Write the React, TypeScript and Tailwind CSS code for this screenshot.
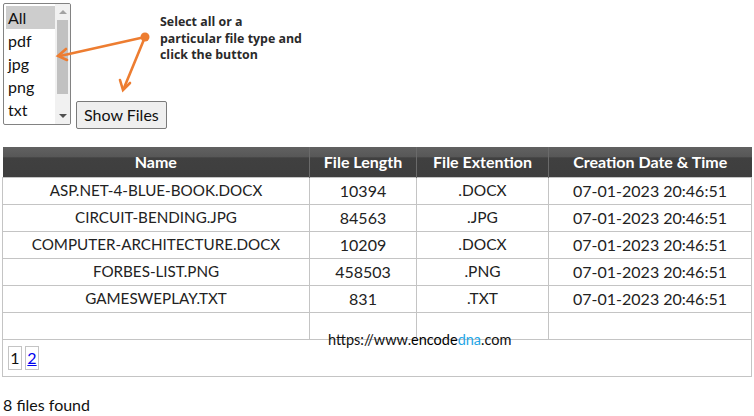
import React from "react";

const files = [
  { name: "ASP.NET-4-BLUE-BOOK.DOCX", len: "10394", ext: ".DOCX" },
  { name: "CIRCUIT-BENDING.JPG", len: "84563", ext: ".JPG" },
  { name: "COMPUTER-ARCHITECTURE.DOCX", len: "10209", ext: ".DOCX" },
  { name: "FORBES-LIST.PNG", len: "458503", ext: ".PNG" },
  { name: "GAMESWEPLAY.TXT", len: "831", ext: ".TXT" },
];

const types = ["All", "pdf", "jpg", "png", "txt"];

function ListBox() {
  return (
    <div className="flex w-[68px] h-[122px] border border-[#828282] rounded-[2px] bg-white overflow-hidden">
      <div className="flex-1 pt-[2px] pl-[2px]">
        {types.map((t, i) => (
          <div
            key={t}
            className={`h-[23px] leading-[23px] pl-[2px] text-[16px] text-[#111] ${i === 0 ? "bg-[#cdcdcd]" : ""}`}
          >
            {t}
          </div>
        ))}
      </div>
      <div className="w-[15px] bg-[#f1f1f1] flex flex-col items-center">
        <div className="h-[16px] flex items-center justify-center">
          <div className="w-0 h-0 border-l-[4px] border-r-[4px] border-b-[4px] border-l-transparent border-r-transparent border-b-[#a3a3a3]" />
        </div>
        <div className="w-[11px] h-[74px] bg-[#c1c1c1]" />
        <div className="flex-1" />
        <div className="h-[16px] flex items-center justify-center">
          <div className="w-0 h-0 border-l-[4px] border-r-[4px] border-t-[4px] border-l-transparent border-r-transparent border-t-[#505050]" />
        </div>
      </div>
    </div>
  );
}

export default function App() {
  return (
    <div className="relative w-[754px] h-[416px] bg-white text-[#222] font-['Lato','Open_Sans',sans-serif]">
      <div className="flex items-end gap-[5px] pl-[3px] pt-[3px]">
        <ListBox />
        <button className="h-[28px] px-[7px] mb-[-4px] border border-[#7a7a7a] rounded-[2px] bg-[#efefef] text-[16px] text-[#111] leading-none">
          Show Files
        </button>
      </div>

      <p className="absolute left-[160px] top-[14px] text-[12.4px] leading-[16.5px] font-bold text-[#2a2a2a] font-['Open_Sans',sans-serif] whitespace-nowrap">
        Select all or a<br />particular file type and<br />click the button
      </p>

      <svg className="absolute left-0 top-0" width="170" height="100" viewBox="0 0 170 100">
        <g stroke="#ed7d31" strokeWidth="2.6" fill="none" strokeLinecap="round">
          <line x1="145" y1="37" x2="60" y2="56" />
          <polyline points="66,49 58,56 67,60" />
          <line x1="145" y1="37" x2="124" y2="88" />
          <polyline points="120,80 123,90 130,83" />
        </g>
        <circle cx="145" cy="37" r="4.5" fill="#ed7d31" />
      </svg>

      <table className="absolute left-[2px] top-[147px] w-[750px] border-collapse text-[16px]">
        <thead>
          <tr className="h-[30px] text-white font-bold bg-[linear-gradient(#616161_0%,#575757_33%,#404040_36%,#3e3e3e_100%)]">
            <th className="w-[307px] border-r border-[#6a6a6a] font-bold">Name</th>
            <th className="w-[107px] border-r border-[#6a6a6a] font-bold">File Length</th>
            <th className="w-[132px] border-r border-[#6a6a6a] font-bold">File Extention</th>
            <th className="w-[203px] font-bold">Creation Date &amp; Time</th>
          </tr>
        </thead>
        <tbody className="text-[#222]">
          {files.map((f) => (
            <tr key={f.name} className="h-[27px] text-center">
              <td className="border border-[#c4c4c4] text-[15.2px]">{f.name}</td>
              <td className="border border-[#c4c4c4]">{f.len}</td>
              <td className="border border-[#c4c4c4] text-[15.5px]">{f.ext}</td>
              <td className="border border-[#c4c4c4]">07-01-2023 20:46:51</td>
            </tr>
          ))}
          <tr className="h-[27px]">
            <td className="border border-[#c4c4c4]" />
            <td className="border border-[#c4c4c4]" />
            <td className="border border-[#c4c4c4]" />
            <td className="border border-[#c4c4c4]" />
          </tr>
          <tr className="h-[37px]">
            <td colSpan={4} className="border border-[#c4c4c4] px-[5px]">
              <div className="flex gap-[3px]">
                <span className="w-[14px] h-[24px] border border-[#c4c4c4] flex items-center justify-center text-[#111]">1</span>
                <a href="#" className="w-[14px] h-[24px] border border-[#c4c4c4] flex items-center justify-center text-[#0000ee] underline">2</a>
              </div>
            </td>
          </tr>
        </tbody>
      </table>

      <div className="absolute left-[328px] top-[329px] text-[14.5px] text-[#111]">
        https://www.<span className="text-black">encode</span><span className="text-[#1ea6e6]">dna</span>.com
      </div>

      <div className="absolute left-[3px] top-[393px] text-[16px] text-[#111]">8 files found</div>
    </div>
  );
}
